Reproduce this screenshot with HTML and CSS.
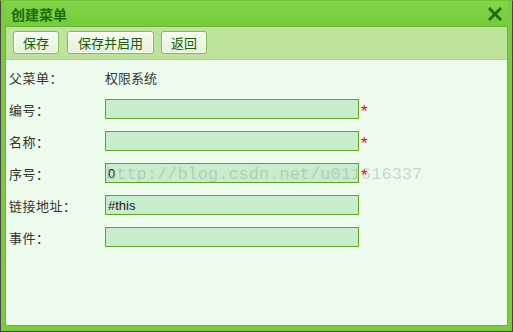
FILE: index.html
```
<!DOCTYPE html>
<html lang="zh-CN">

<head>
    <meta charset="UTF-8">
    <title>创建菜单</title>
    <link rel="stylesheet" href="styles.css">
</head>

<body>
    <div class="dialog">
        <div class="title-bar">
            <h1>创建菜单</h1>
            <span class="close">
                <svg width="18" height="18" viewBox="0 0 18 18">
                    <path d="M2 4 L4 2 L9 7 L14 2 L16 4 L11 9 L16 14 L14 16 L9 11 L4 16 L2 14 L7 9 Z" fill="#1f6a0c" />
                </svg>
            </span>
        </div>
        <div class="panel">
            <div class="toolbar">
                <button class="btn btn-save">保存</button>
                <button class="btn btn-enable">保存并启用</button>
                <button class="btn btn-back">返回</button>
            </div>
            <div class="form">
                <div class="row">
                    <label>父菜单：</label>
                    <span class="value">权限系统</span>
                </div>
                <div class="row">
                    <label>编号：</label>
                    <input type="text"><span class="req">*</span>
                </div>
                <div class="row">
                    <label>名称：</label>
                    <input type="text"><span class="req">*</span>
                </div>
                <div class="row">
                    <label>序号：</label>
                    <input type="text" value="0"><span class="req">*</span>
                </div>
                <div class="row">
                    <label>链接地址：</label>
                    <input type="text" value="#this">
                </div>
                <div class="row">
                    <label>事件：</label>
                    <input type="text">
                </div>
                <div class="watermark">http://blog.csdn.net/u011616337</div>
            </div>
        </div>
    </div>
</body>

</html>
```

FILE: styles.css
```
* {
    box-sizing: border-box;
    margin: 0;
    padding: 0;
}

body {
    width: 513px;
    height: 332px;
    font-family: "Noto Sans CJK SC", "Liberation Sans", sans-serif;
    font-size: 13px;
    color: #333;
}

.dialog {
    width: 513px;
    height: 332px;
    background-color: #7acc3c;
    border: 1px solid #454545;
    border-top-color: #72c53a;
    padding: 0 4px 5px 4px;
    display: flex;
    flex-direction: column;
}

.title-bar {
    height: 25px;
    display: flex;
    justify-content: space-between;
    align-items: center;
    padding: 0 4px 0 6px;
    background: linear-gradient(#82d547, #76cb3a);
}

.title-bar h1 {
    font-size: 14px;
    font-weight: bold;
    color: #1c6a08;
    line-height: 1;
    padding-top: 1px;
}

.close {
    display: flex;
    margin-top: 1px;
}

.panel {
    flex: 1;
    background-color: #edfbed;
    border: 1px solid #64b832;
    display: flex;
    flex-direction: column;
}

.toolbar {
    height: 33px;
    background-color: #bee39b;
    border-bottom: 1px solid #a9d784;
    display: flex;
    align-items: center;
    gap: 7px;
    padding: 0 0 1px 7px;
}

.btn {
    height: 23px;
    font-family: "Noto Sans CJK SC", sans-serif;
    font-size: 13px;
    color: #1c5a08;
    background: linear-gradient(#f6fcf2, #e2f2d6);
    border: 1px solid #84b860;
    border-radius: 3px;
    box-shadow: inset 0 0 0 1px #ffffff;
    cursor: pointer;
}

.btn-save,
.btn-back {
    width: 46px;
}

.btn-enable {
    width: 87px;
    margin-left: 1px;
}

.form {
    position: relative;
    padding: 1px 0 0 3px;
}

.row {
    height: 32px;
    display: flex;
    align-items: center;
}

.row label {
    width: 96px;
    color: #333;
    letter-spacing: 0.5px;
}

.value {
    color: #333;
}

.row input {
    width: 254px;
    height: 20px;
    background-color: #c8edcc;
    border: 1px solid #5ea622;
    font-family: "Liberation Sans", sans-serif;
    font-size: 13px;
    color: #222;
    padding: 0 2px;
    outline: none;
}

.req {
    color: #ff0000;
    font-family: "Liberation Sans", sans-serif;
    font-size: 17px;
    margin-left: 2px;
    padding-top: 6px;
}

.watermark {
    position: absolute;
    left: 100px;
    top: 105px;
    font-family: "Liberation Mono", monospace;
    font-size: 17px;
    color: rgba(140, 140, 140, 0.35);
    pointer-events: none;
}
```
